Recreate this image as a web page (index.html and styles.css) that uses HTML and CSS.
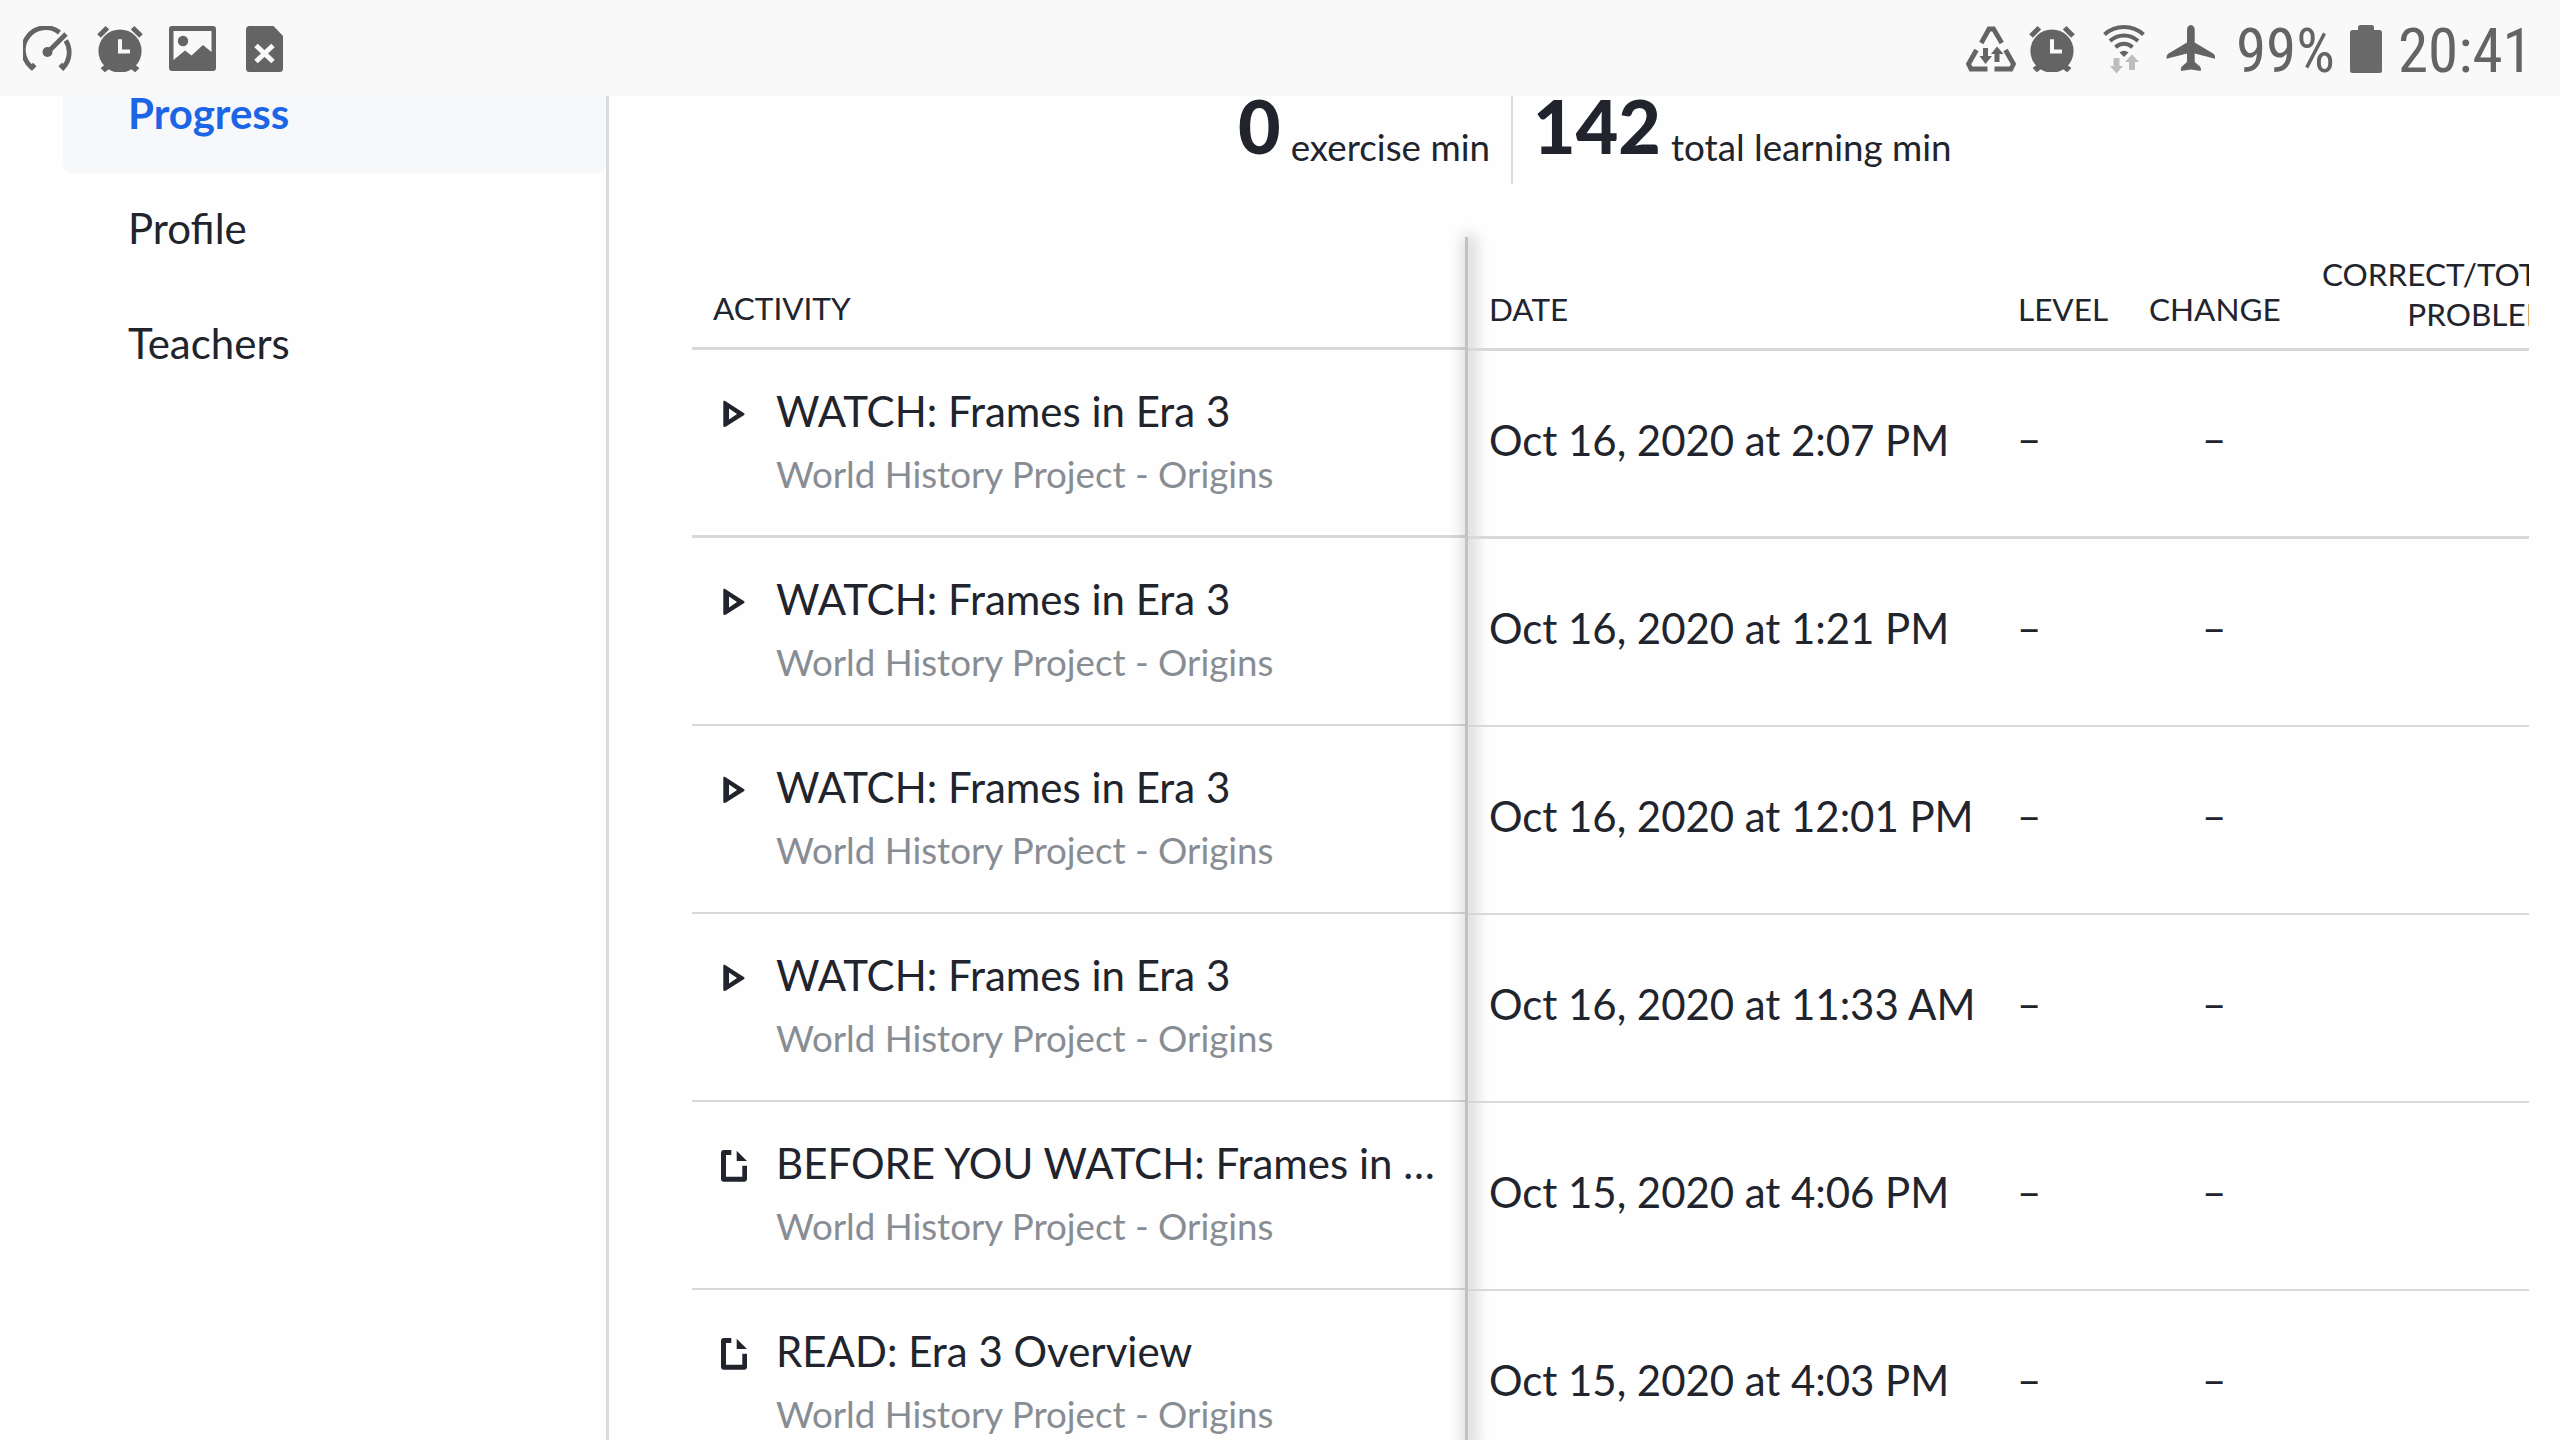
FILE: index.html
```
<!DOCTYPE html>
<html lang="en">
<head>
<meta charset="utf-8">
<title>Progress</title>
<link rel="stylesheet" href="styles.css">
</head>
<body>
<svg class="defs" aria-hidden="true">
  <symbol id="alarm" viewBox="0 0 48 48">
    <circle cx="24" cy="27" r="21.6"/>
    <path d="M1.2 10.2 9.6 2l3.6 3.6L4.8 13.800zM46.800 10.200 38.400 2l-3.600 3.600 8.400 8.200z"/>
    <path d="M9.200 40.500l4.200 4.200-4.600 3.600-4.200-4.200zM38.800 40.500l-4.200 4.200 4.600 3.600 4.200-4.200z"/>
    <path class="cut" d="M22 15.300h4V25.600h8v4H22z"/>
  </symbol>
  <symbol id="play" viewBox="0 0 32 34">
    <path fill-rule="evenodd" d="M7.500 4.200C6.400 3.400 5.300 3.900 5.300 5.200v23.200c0 1.600 1.400 2.100 2.700 1.200L25.800 18.200c1-.7 1-1.600 0-2.300zM11 11.600l8 5.400-8 5.500z"/>
  </symbol>
  <symbol id="page" viewBox="0 0 32 34">
    <path d="M13.300 1v5H8v21.700h16.300v-11H29v13q0 3-3 3H6q-3 0-3-3V4q0-3 3-3zM18.700 1.700 29 12H18.700z"/>
  </symbol>
</svg>

<header class="status">
  <div class="status-left">
    <svg class="i-gauge" viewBox="0 0 50 46"><g class="ln"><path d="M36.500 6.500A22.300 22.300 0 0 0 8.800 41.500l3-3M42.800 14.500A22.300 22.300 0 0 1 40.200 41.500l-3-3M25 26 43 8"/></g><circle cx="24.500" cy="26" r="5"/></svg>
    <svg class="i-alarm"><use href="#alarm"/></svg>
    <svg class="i-image" viewBox="0 0 47 45"><path fill-rule="evenodd" d="M3 0h41q3 0 3 3v39q0 3-3 3H3q-3 0-3-3V3q0-3 3-3zM4.500 5v29L16 24.500l6.500 5L34 19l8.500 7V5z"/><circle cx="14" cy="15" r="5.200"/></svg>
    <svg class="i-file" viewBox="0 0 37 46"><path d="M3.500 0H27.500L37 10v32.500q0 3.500-3.500 3.500h-30Q0 46 0 42.500v-39Q0 0 3.500 0z"/><path class="cross" d="M10 19.500l17 16M27 19.500l-17 16"/></svg>
  </div>
  <div class="status-right">
    <svg class="i-saver" viewBox="0 0 50 46"><path class="ln5" d="M15.300 17 23 3h4.500L35.800 17M10.500 24 2.500 38l2.500 5H21.500M39.500 24l8 14-2.500 5H28.500"/><path d="M17 22h5v8h4l-6.500 8L13.500 30H17zM28.500 36h5V28h4L31 20.500 25 28h3.500z"/></svg>
    <svg class="i-alarm2"><use href="#alarm"/></svg>
    <svg class="i-wifi" viewBox="0 0 42 50"><path class="ln4" d="M1.500 10.500a29 29 0 0 1 39 0M7 17a20.500 20.500 0 0 1 28 0M12.500 23.200a12.500 12.500 0 0 1 17 0"/><path d="M16.500 28.500q4.500-3.500 9 0L21 33z"/><path class="dim" d="M10.500 34h6v8H20l-6.500 7.500L7 42h3.500zM26 46h6v-8h4l-7-7.500L22 38h4z"/></svg>
    <svg class="i-plane" viewBox="0 0 50 48"><path d="M24.800 0c2.500 0 3.900 2.300 3.900 5v12.500L47.500 28.700q2 1.300 1.500 5L28.700 28.500v8.500L34 41.500q1.500 1.500.8 4.500L24.800 44.500 15 46q-.8-3 .8-4.500L21 37v-8.500L.6 33.700q-.5-3.700 1.500-5L21 17.500V5c0-2.700 1.400-5 3.800-5z"/></svg>
    <span class="pct">99%</span>
    <svg class="i-batt" viewBox="0 0 32 48"><path d="M10.500 0h11q2.500 0 2.500 2.500V5h5.500Q32 5 32 7.500v38q0 2.500-2.500 2.500h-27Q0 48 0 45.500v-38Q0 5 2.500 5H8V2.500Q8 0 10.500 0z"/></svg>
    <span class="clock">20:41</span>
  </div>
</header>

<div class="layout">
  <nav class="side">
    <a class="nav-item active">Progress</a>
    <a class="nav-item">Profile</a>
    <a class="nav-item">Teachers</a>
  </nav>
  <main class="main">
    <section class="stats">
      <div class="stat first"><b>0</b><span>exercise min</span></div>
      <div class="stat"><b>142</b><span>total learning min</span></div>
    </section>
    <section class="table">
      <div class="col-activity">
        <div class="head thick">ACTIVITY</div>
        <div class="act thick"><svg><use href="#play"/></svg><div><p>WATCH: Frames in Era 3</p><small>World History Project - Origins</small></div></div>
        <div class="act"><svg><use href="#play"/></svg><div><p>WATCH: Frames in Era 3</p><small>World History Project - Origins</small></div></div>
        <div class="act"><svg><use href="#play"/></svg><div><p>WATCH: Frames in Era 3</p><small>World History Project - Origins</small></div></div>
        <div class="act"><svg><use href="#play"/></svg><div><p>WATCH: Frames in Era 3</p><small>World History Project - Origins</small></div></div>
        <div class="act"><svg><use href="#page"/></svg><div><p>BEFORE YOU WATCH: Frames in …</p><small>World History Project - Origins</small></div></div>
        <div class="act"><svg><use href="#page"/></svg><div><p>READ: Era 3 Overview</p><small>World History Project - Origins</small></div></div>
      </div>
      <div class="divider"></div>
      <div class="col-data">
        <div class="row head thick"><span>DATE</span><span>LEVEL</span><span>CHANGE</span><span class="problems">CORRECT/TOTAL<br>PROBLEMS</span></div>
        <div class="row thick"><span class="date">Oct 16, 2020 at 2:07 PM</span><span class="lvl">–</span><span class="chg">–</span></div>
        <div class="row"><span class="date">Oct 16, 2020 at 1:21 PM</span><span class="lvl">–</span><span class="chg">–</span></div>
        <div class="row"><span class="date">Oct 16, 2020 at 12:01 PM</span><span class="lvl">–</span><span class="chg">–</span></div>
        <div class="row"><span class="date">Oct 16, 2020 at 11:33 AM</span><span class="lvl">–</span><span class="chg">–</span></div>
        <div class="row"><span class="date">Oct 15, 2020 at 4:06 PM</span><span class="lvl">–</span><span class="chg">–</span></div>
        <div class="row"><span class="date">Oct 15, 2020 at 4:03 PM</span><span class="lvl">–</span><span class="chg">–</span></div>
      </div>
    </section>
  </main>
</div>
</body>
</html>
```
FILE: styles.css
```
* { box-sizing: border-box; }
body {
  margin: 0;
  width: 2560px;
  height: 1440px;
  overflow: hidden;
  display: flex;
  flex-direction: column;
  background: #fefefe;
  color: #21242c;
  font-family: Lato, "Liberation Sans", sans-serif;
  font-size: 42px;
}
.defs { display: none; }

/* Status bar */
.status {
  flex: none;
  height: 96px;
  display: flex;
  justify-content: space-between;
  background: #f9f9f9;
  color: #646464;
  fill: #646464;
}
.status svg { flex: none; }
.status-left, .status-right { display: flex; align-items: flex-start; }
.status-left { padding-left: 23px; }
.status-right { padding-right: 32px; }
.cut { fill: #f9f9f9; }
.ln, .ln4, .ln5 { fill: none; stroke: #646464; stroke-width: 4.8; }
.ln4 { stroke-width: 4; }
.cross { stroke: #f9f9f9; stroke-width: 5; }
.dim { fill: #bdbdbd; }
.i-gauge { width: 50px; height: 46px; margin-top: 26px; }
.i-alarm { width: 48px; height: 48px; margin: 24px 0 0 23px; }
.i-image { width: 47px; height: 45px; margin: 26px 0 0 25px; }
.i-file { width: 37px; height: 46px; margin: 26px 0 0 30px; }
.i-saver { width: 50px; height: 46px; margin-top: 26px; }
.i-alarm2 { width: 48px; height: 48px; margin: 24px 0 0 12px; }
.i-wifi { width: 42px; height: 50px; margin: 24px 0 0 27px; }
.i-plane { width: 50px; height: 48px; margin: 25px 0 0 21px; }
.i-batt { width: 32px; height: 48px; margin: 25px 0 0 16px; fill: #6a6a6a; }
.pct, .clock {
  font-family: "Roboto Condensed", Roboto, sans-serif;
  font-size: 61px;
  line-height: 70px;
  white-space: nowrap;
  font-stretch: 75%;
}
.pct { width: 98px; margin: 16px 0 0 20px; }
.clock { width: 130px; margin: 16px 0 0 16px; }

/* Page */
.layout { flex: 1; min-height: 0; display: flex; }
.side {
  flex: none;
  width: 609px;
  padding-left: 63px;
  border-right: 3px solid #dadbdc;
}
.nav-item {
  display: block;
  height: 115px;
  padding-left: 65px;
  line-height: 109px;
}
.nav-item.active {
  height: 78px;
  line-height: 34px;
  background: #f7f8fa;
  border-radius: 0 0 10px 10px;
  color: #1b65e6;
  font-weight: 700;
}
.main { flex: 1; min-width: 0; padding-left: 83px; }

.stats { display: flex; height: 141px; padding-left: 546px; }
.stat {
  display: flex;
  align-items: flex-start;
  height: 88px;
  padding-left: 20px;
  white-space: nowrap;
}
.stat.first { width: 275px; padding-left: 0; border-right: 2px solid #dadbdc; }
.stat b { font-size: 73.5px; line-height: 88px; font-weight: 900; margin-top: -14px; }
.stat span { font-size: 36.75px; line-height: 44px; margin: 29px 0 0 10px; }

/* Activity table: fixed first column, clipped data columns */
.table { display: flex; width: 1837px; height: 1203px; }
.col-activity { flex: none; width: 773px; }
.head { font-size: 31.5px; line-height: 40px; }
.col-activity .head { height: 113px; padding: 51px 21px 0; border-bottom: 3px solid #d6d8da; }
.act {
  display: flex;
  height: 188px;
  padding: 36px 21px 0;
  border-bottom: 2px solid #d6d8da;
}
.act.thick { border-bottom-width: 3px; }
.act svg { flex: none; width: 32px; height: 34px; margin: 11px 26px 0 5px; fill: #21242c; }
.act div { min-width: 0; white-space: nowrap; }
.act p { margin: 0; line-height: 51px; }
.act small { display: block; margin-top: 15px; font-size: 36.7px; line-height: 44px; color: #888d93; }
.divider { flex: none; width: 3px; background: #c0c2c5; box-shadow: 3px 4px 14px 6px rgba(0,0,0,.14); }
.col-data { flex: 1; min-width: 0; overflow: hidden; }
.row {
  display: grid;
  grid-template-columns: 529px 131px 173px 260px;
  align-items: center;
  width: 1120px;
  height: 188px;
  padding: 0 0 8px 21px;
  border-bottom: 2px solid #d6d8da;
  white-space: nowrap;
}
.row.thick { border-bottom-width: 3px; }
.row.head { height: 114px; align-items: start; padding-top: 52px; }
.date { letter-spacing: -.05px; }
.lvl, .chg { padding-bottom: 3px; margin-left: -1px; }
.chg { padding-left: 54px; }
.problems { margin-top: -35px; width: 250px; text-align: right; }
```
